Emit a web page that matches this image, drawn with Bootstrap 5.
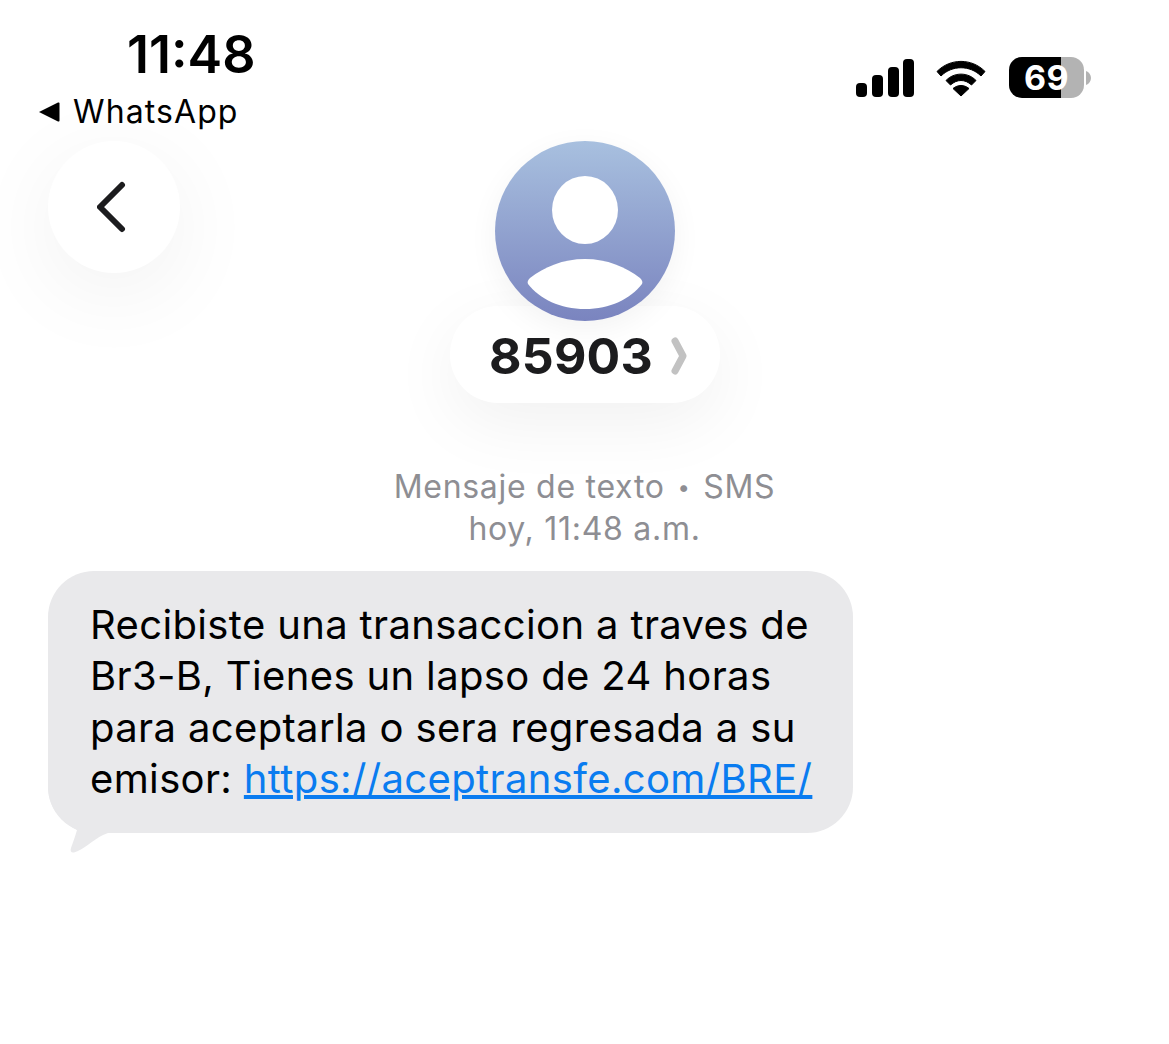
<!DOCTYPE html>
<html lang="es"><head><meta charset="utf-8"><title>SMS</title>
<link href="https://cdn.jsdelivr.net/npm/bootstrap@5.3.0/dist/css/bootstrap.min.css" rel="stylesheet">
<style>
html,body{height:100%}
body{background:#fff;font-family:Inter,"Liberation Sans",sans-serif;color:#000;overflow:hidden}
.screen{width:1169px;height:1044px;overflow:hidden}
.status-bar{height:141px;padding:0 78px 0 38px}
.status-left{width:220px;padding-top:28px}
.clock{font-size:52px;font-weight:600;line-height:54px;margin-left:89px;letter-spacing:0}
.crumb{font-size:32px;line-height:38px;margin-top:11px;gap:13px;letter-spacing:1.1px;white-space:nowrap}
.status-right{gap:22px;padding-top:57px}
.bat{width:75px;height:41px;border-radius:13px;background:linear-gradient(90deg,#000 0,#000 69%,#b3b3b3 69%);color:#fff;font-weight:700;font-size:34px;line-height:41px;padding-left:15px;letter-spacing:.5px}
.head-grid{display:grid;grid-template-columns:1fr 270px 1fr}
.back-cell{padding-left:48px}
.back-btn{width:132px;height:132px;border-radius:50%;background:#fff;box-shadow:0 20px 90px rgba(0,0,0,.06)}
.avatar-img{width:180px;height:180px;border-radius:50%;background:linear-gradient(#a8c0df,#7a84bf);box-shadow:0 8px 30px rgba(0,0,0,.05);overflow:hidden;position:relative;z-index:1}
.name-pill{width:270px;height:97px;margin-top:-15px;border-radius:48px;background:#fff;box-shadow:0 20px 70px rgba(0,0,0,.06);font-size:50px;font-weight:700;color:#1c1c1e;gap:18px;letter-spacing:.2px;padding-left:7px;padding-top:3px}
.meta{margin-top:63px;text-align:center;color:#8e8e93;font-size:32px;line-height:42px;letter-spacing:.72px}
.sep-dot{font-size:22px;margin:0 3px;vertical-align:3px}
.bubble-wrap{padding-left:48px;margin-top:21px}
.bubble{position:relative;width:805px;height:262px;border-radius:46px;background:#e9e9eb;padding:28px 20px 0 42px;font-size:40px;line-height:51.3px;letter-spacing:.36px;white-space:nowrap}
.bubble-text{position:relative;z-index:1}
.bubble a{color:#0a7cf0}
.tail{position:absolute;left:0;bottom:-27px}
</style></head><body>
<div class="screen">
  <div class="status-bar d-flex justify-content-between align-items-start">
    <div class="status-left">
      <div class="clock">11:48</div>
      <div class="crumb d-flex align-items-center"><svg width="22" height="22" viewBox="0 0 22 22"><path d="M1 11 20 1.500c.8-.3 1.500 0 1.500 1v17c0 1-.7 1.300-1.500 1z" fill="#000"/></svg><span>WhatsApp</span></div>
    </div>
    <div class="status-right d-flex align-items-center">
      <svg width="58" height="38" viewBox="0 0 58 38"><g fill="#000"><rect x="0" y="24" width="11" height="14" rx="4"/><rect x="16" y="16" width="11" height="22" rx="4"/><rect x="32" y="8" width="11" height="30" rx="4"/><rect x="47" y="0" width="11" height="38" rx="4"/></g></svg>
      <svg width="51" height="38" viewBox="0 0 51 38"><path d="M1 12.500C14-1 36-1 49 12.500l-4 4.500C34 6 16 6 5 17z" fill="#000" stroke="#000" stroke-linejoin="round" stroke-width="1"/><path d="M10 21.500C18 13 32 13 40 21.500l-4.500 4.500C29 20 21 20 14.500 26z" fill="#000" stroke="#000" stroke-linejoin="round" stroke-width="1"/><path d="M25 37 17 29.500c5-4 11-4 16 0z" fill="#000" stroke="#000" stroke-linejoin="round" stroke-width="1"/></svg>
      <div class="d-flex align-items-center" style="gap:2px">
        <div class="bat">69</div>
        <svg width="5" height="14" viewBox="0 0 5 14"><path d="M0 0c3 1 5 4 5 7s-2 6-5 7z" fill="#b3b3b3"/></svg>
      </div>
    </div>
  </div>
  <div class="head-grid">
    <div class="back-cell">
      <div class="back-btn d-flex align-items-center justify-content-center"><svg width="34" height="52" viewBox="0 0 34 52"><path d="M25 4 3 26l22 22" fill="none" stroke="#1c1c1e" stroke-width="6" stroke-linecap="round" stroke-linejoin="round"/></svg></div>
    </div>
    <div class="d-flex flex-column align-items-center">
      <div class="avatar-img"><svg width="180" height="180" viewBox="0 0 180 180"><ellipse cx="90" cy="69" rx="33" ry="34" fill="#fff"/><path d="M33 143c-1-2 0-4 2-6 14-11 33-19 55-19s41 8 55 19c2 2 3 4 2 6-12 15-32 25-57 25s-45-10-57-25z" fill="#fff"/></svg></div>
      <div class="name-pill d-flex align-items-center justify-content-center"><span>85903</span><svg width="16" height="38" viewBox="0 0 16 38"><path d="M4 4l8 15-8 15" fill="none" stroke="#c2c2c2" stroke-width="7" stroke-linecap="round" stroke-linejoin="round"/></svg></div>
    </div>
    <div></div>
  </div>
  <div class="meta"><div>Mensaje de texto <span class="sep-dot">•</span> SMS</div><div>hoy, 11:48 a.m.</div></div>
  <div class="bubble-wrap">
    <div class="bubble">
      <div class="bubble-text">Recibiste una transaccion a traves de<br>Br3-B, Tienes un lapso de 24 horas<br>para aceptarla o sera regresada a su<br>emisor: <a href="#">https://aceptransfe.com/BRE/</a></div>
      <svg class="tail" width="60" height="80" viewBox="0 0 60 80"><path d="M0 7C1 25 8 38 29 50 27 57 25 62 23 68c-1 3 0 5 3 4.500C35 70 45 60 55 55l5-2V7z" fill="#e9e9eb"/></svg>
    </div>
  </div>
</div>
</body></html>
